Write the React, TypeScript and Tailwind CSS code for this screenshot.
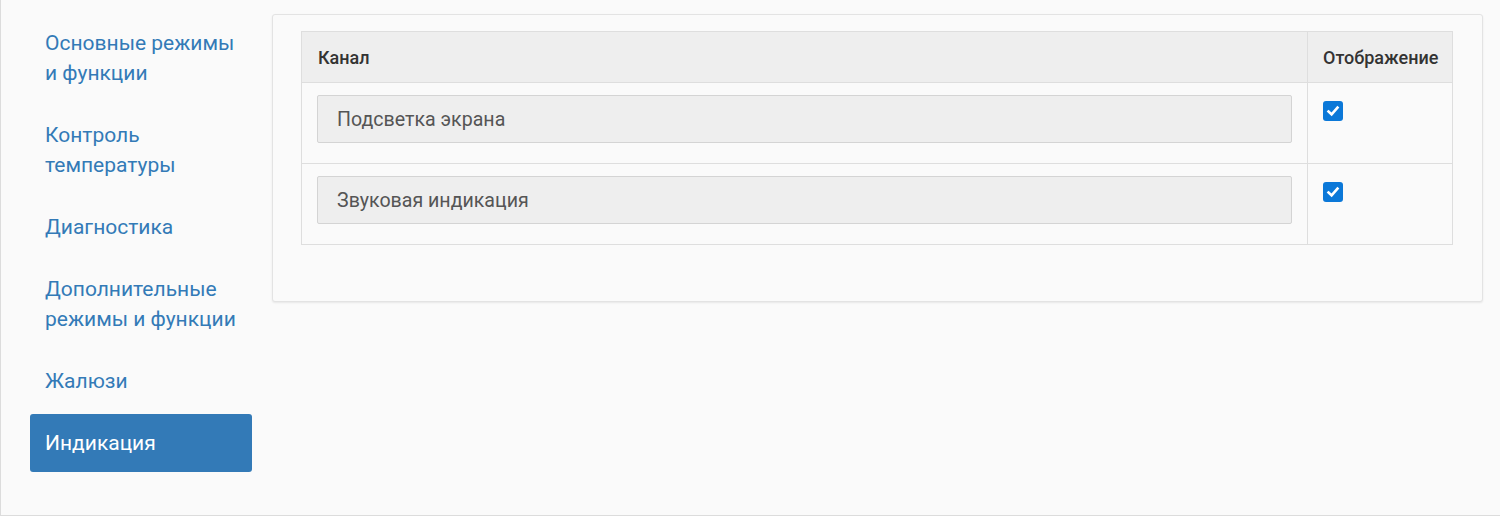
import { useState } from "react";

const menu = [
  "Основные режимы и функции",
  "Контроль температуры",
  "Диагностика",
  "Дополнительные режимы и функции",
  "Жалюзи",
  "Индикация",
];

const channels = [
  { name: "Подсветка экрана", on: true },
  { name: "Звуковая индикация", on: true },
];

function Check({ checked, onChange }: { checked: boolean; onChange: () => void }) {
  return (
    <button
      onClick={onChange}
      className={`w-[20px] h-[20px] rounded-[3px] flex items-center justify-center ${checked ? "bg-[#0b78d8]" : "bg-white border border-[#767676]"}`}
    >
      {checked && (
        <svg width="14" height="14" viewBox="0 0 14 14">
          <path d="M2.5 7.5 L5.6 10.4 L11.5 3.6" fill="none" stroke="white" strokeWidth="2.6" strokeLinecap="square" />
        </svg>
      )}
    </button>
  );
}

export default function App() {
  const [active, setActive] = useState("Индикация");
  const [rows, setRows] = useState(channels);

  return (
    <div className="h-[516px] w-full bg-[#fafafa] border-l border-b border-[#dcdcdc] flex font-['Roboto',sans-serif]">
      {/* nav */}
      <div className="w-[271px] shrink-0 pl-[29px] pr-[20px] pt-[14px] flex flex-col gap-[4px]">
        {menu.map((m) => (
          <div
            key={m}
            onClick={() => setActive(m)}
            className={`px-[15px] py-[14px] text-[21px] leading-[30px] rounded-[3px] cursor-pointer ${m == active ? "bg-[#337ab7] text-white" : "text-[#337ab7]"}`}
          >
            {m}
          </div>
        ))}
      </div>

      {/* panel */}
      <div className="flex-1 pt-[14px] pr-[17px]">
        <div className="bg-[#fafafa] border border-[#e3e3e3] rounded-[3px] shadow-[0_1px_2px_rgba(0,0,0,0.08)] pt-[16px] pb-[56px] pl-[28px] pr-[29px]">
          <table className="w-full border-collapse border border-[#dedede]">
            <thead>
              <tr className="bg-[#eeeeee] h-[51px]">
                <th className="text-left font-medium text-[18px] text-[#333] pl-[16px] border-b border-[#dedede]">Канал</th>
                <th className="w-[145px] text-left font-medium text-[18px] text-[#333] pl-[15px] pr-0 border-l border-b border-[#dedede] whitespace-nowrap">Отображение</th>
              </tr>
            </thead>
            <tbody>
              {rows.map((r, i) => (
                <tr key={r.name} className="h-[81px] border-b border-[#dedede]">
                  <td className="px-[15px] align-top pt-[12px]">
                    <div className="h-[48px] bg-[#eeeeee] border border-[#d4d4d4] rounded-[2px] px-[19px] pt-[1px] flex items-center text-[19.6px] text-[#555]">
                      {r.name}
                    </div>
                  </td>
                  <td className="border-l border-[#dedede] align-top pl-[15px] pt-[18px]">
                    <Check
                      checked={r.on}
                      onChange={() => setRows(rows.map((x, j) => (j == i ? { ...x, on: !x.on } : x)))}
                    />
                  </td>
                </tr>
              ))}
            </tbody>
          </table>
        </div>
      </div>
    </div>
  );
}
